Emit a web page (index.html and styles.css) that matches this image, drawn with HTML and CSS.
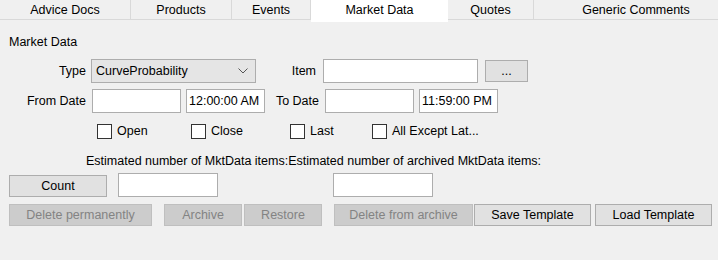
FILE: index.html
```html
<!DOCTYPE html>
<html lang="en">
    <head>
        <meta charset="UTF-8">
        <title>Market Data</title>
        <link rel="stylesheet" href="styles.css">
    </head>
    <body>
        <nav class="tabs">
            <span class="tab t-advice">Advice Docs</span>
            <span class="tab t-products">Products</span>
            <span class="tab t-events">Events</span>
            <span class="tab t-market active">Market Data</span>
            <span class="tab t-quotes">Quotes</span>
            <span class="tab t-generic">Generic Comments</span>
        </nav>

        <main class="panel">
            <h2>Market Data</h2>

            <div class="row row-type">
                <label class="lbl lbl-type">Type</label>
                <div class="combo">
                    <span>CurveProbability</span>
                    <svg width="10" height="6" viewBox="0 0 10 6"><path d="M0.5 0.5 L5 5 L9.5 0.5" fill="none" stroke="#555" stroke-width="1"/></svg>
                </div>
                <label class="lbl lbl-item">Item</label>
                <div class="field f-item"></div>
                <button class="btn btn-dots">...</button>
            </div>

            <div class="row row-date">
                <label class="lbl lbl-from">From Date</label>
                <div class="field f-date"></div>
                <div class="field f-time">12:00:00 AM</div>
                <label class="lbl lbl-to">To Date</label>
                <div class="field f-date"></div>
                <div class="field f-time">11:59:00 PM</div>
            </div>

            <div class="row row-checks">
                <label class="check c-open"><i></i>Open</label>
                <label class="check c-close"><i></i>Close</label>
                <label class="check c-last"><i></i>Last</label>
                <label class="check c-all"><i></i>All Except Lat...</label>
            </div>

            <div class="row row-est">
                <span class="est-a">Estimated number of MktData items:</span><span>Estimated number of archived MktData items:</span>
            </div>

            <div class="row row-count">
                <button class="btn btn-count">Count</button>
                <div class="field f-count"></div>
                <div class="field f-count f-archived"></div>
            </div>

            <div class="row row-actions">
                <button class="btn off b-delete">Delete permanently</button>
                <button class="btn off b-archive">Archive</button>
                <button class="btn off b-restore">Restore</button>
                <button class="btn off b-delarch">Delete from archive</button>
                <button class="btn b-save">Save Template</button>
                <button class="btn b-load">Load Template</button>
            </div>
        </main>
    </body>
</html>
```

FILE: styles.css
```css
body{
    margin: 0;
    width: 718px;
    height: 260px;
    background: #f0f0f0;
    font-family: "Liberation Sans", Arial, sans-serif;
    font-size: 12.5px;
    color: #000;
    overflow: hidden;
}

.tabs{
    display: flex;
    height: 22px;
}
.tab{
    flex-shrink: 0;
    box-sizing: border-box;
    height: 20px;
    border-right: 1px solid #d9d9d9;
    border-bottom: 1px solid #d9d9d9;
    text-align: center;
    line-height: 21px;
    font-size: 12.5px;

    &.active{
        height: 22px;
        background: #fff;
        border: none;
        line-height: 20px;
    }
}
.t-advice{ width: 131px; }
.t-products{ width: 101px; }
.t-events{ width: 79px; }
.t-market{ width: 137px; }
.t-quotes{ width: 86px; }
.t-generic{ width: 204px; border-right: none; }

.panel{
    padding: 0 0 0 9px;

    h2{
        margin: 0;
        font-size: 12.5px;
        font-weight: normal;
        line-height: 16px;
        padding: 12px 0 0 0;
    }
}

.row{
    display: flex;
    align-items: center;
}

.lbl{
    text-align: right;
}

.field{
    box-sizing: border-box;
    height: 24px;
    background: #fff;
    border: 1px solid #adadad;
    padding: 0 3px;
    line-height: 22px;
}

.btn{
    box-sizing: border-box;
    height: 22px;
    padding: 0;
    border: 1px solid #adadad;
    background: #e1e1e1;
    font-family: inherit;
    font-size: 12.5px;
    color: #000;

    &.off{
        background: #cccccc;
        border-color: #bfbfbf;
        color: #838383;
    }
}

.row-type{
    margin-top: 9px;
    height: 24px;
}
.lbl-type{ width: 77px; }
.combo{
    box-sizing: border-box;
    width: 165px;
    height: 24px;
    margin-left: 5px;
    border: 1px solid #adadad;
    background: #e5e5e5;
    display: flex;
    align-items: center;
    justify-content: space-between;
    padding: 0 7px 0 4px;
}
.lbl-item{ width: 60px; }
.f-item{ width: 155px; margin-left: 7px; }
.btn-dots{ width: 43px; margin-left: 7px; }

.row-date{
    margin-top: 6px;
    height: 24px;
}
.lbl-from{ width: 77px; }
.f-date{ width: 89px; margin-left: 6px; }
.f-time{ width: 79px; margin-left: 5px; padding: 0 2px; }
.lbl-to{ width: 54px; }

.row-checks{
    margin-top: 9px;
    height: 18px;
}
.check{
    display: flex;
    align-items: center;
    gap: 5px;

    i{
        box-sizing: border-box;
        width: 15px;
        height: 15px;
        border: 1px solid #333;
        background: #fff;
    }
}
.c-open{ margin-left: 88px; width: 94px; }
.c-close{ width: 99px; }
.c-last{ width: 82px; }

.row-est{
    margin-top: 13px;
    padding-left: 77px;
    height: 16px;
}

.row-count{
    margin-top: 4px;
    height: 24px;
    align-items: flex-end;
}
.btn-count{ width: 98px; }
.f-count{ width: 100px; margin-left: 11px; }
.f-archived{ margin-left: 115px; }

.row-actions{
    margin-top: 7px;
    height: 22px;
}
.b-delete{ width: 143px; }
.b-archive{ width: 78px; margin-left: 12px; }
.b-restore{ width: 78px; margin-left: 2px; }
.b-delarch{ width: 139px; margin-left: 12px; }
.b-save{ width: 117px; margin-left: 1px; }
.b-load{ width: 117px; margin-left: 4px; }
```
